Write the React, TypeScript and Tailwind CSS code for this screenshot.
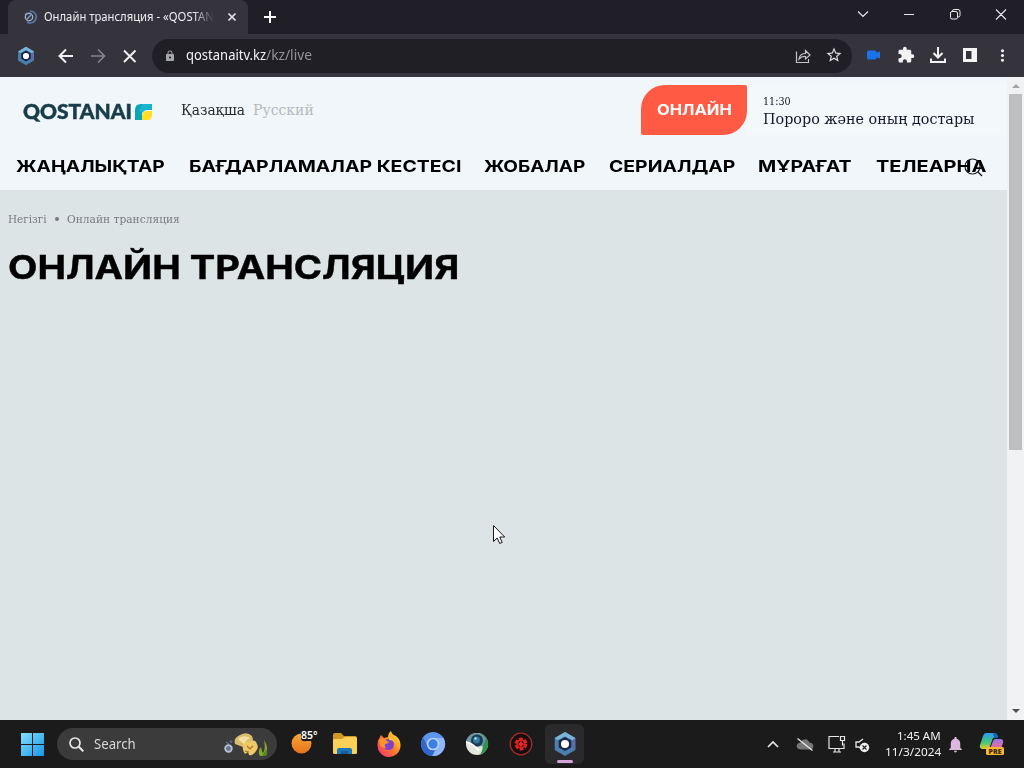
import { useLayoutEffect, useRef, useState } from "react";
import { MdLock, MdExtension, MdMoreVert, MdStarBorder, MdNotifications } from "react-icons/md";

const nav = [
  { label: "ЖАҢАЛЫҚТАР", w: 149 },
  { label: "БАҒДАРЛАМАЛАР КЕСТЕСІ", w: 272 },
  { label: "ЖОБАЛАР", w: 101 },
  { label: "СЕРИАЛДАР", w: 126 },
  { label: "МҰРАҒАТ", w: 94 },
  { label: "ТЕЛЕАРНА", w: 110 },
];

// stretches a line of text to the given width
function Fit({ text, w, className = "" }: { text: string; w: number; className?: string }) {
  const ref = useRef<HTMLSpanElement>(null);
  const [scale, setScale] = useState(1);

  useLayoutEffect(() => {
    if (ref.current) setScale(w / ref.current.offsetWidth);
  }, [w, text]);

  return (
    <span className={`block shrink-0 whitespace-nowrap ${className}`} style={{ width: w }}>
      <span ref={ref} className="inline-block origin-left" style={{ transform: `scaleX(${scale})` }}>
        {text}
      </span>
    </span>
  );
}

function HexIcon({ size }: { size: number }) {
  return (
    <svg width={size} height={size} viewBox="0 0 24 24">
      <path d="M12 1l9.500 5.500v11L12 23l-9.500-5.500v-11z" fill="#4a7fae" />
      <path d="M12 1l9.500 5.500v11L12 12z" fill="#5b6fb0" />
      <path d="M12 1L2.500 6.500l2.500 2L12 5l7 3.500 2.500-2z" fill="#78b4d6" />
      <path d="M12 5.500l5.800 3.300v6.500L12 18.500l-5.800-3.200V8.800z" fill="#1c2746" />
      <circle cx="12" cy="12" r="3.700" fill="#fff" />
    </svg>
  );
}

function TabStrip() {
  return (
    <div className="flex h-[34px] bg-[#201e27] pl-2">
      <div className="flex w-60 items-center rounded-t-lg bg-[#35343c] pl-3.5">
        <svg width="16" height="16" viewBox="0 0 16 16" fill="none">
          <path d="M8 2a6 6 0 1 1-3 11" stroke="#5578a5" strokeWidth="1.600" />
          <circle cx="7" cy="8" r="3.700" stroke="#9aacc5" strokeWidth="1.400" />
          <path d="M5 10l4-4M3 6l2-2" stroke="#7fa0c8" strokeWidth="1.400" />
        </svg>
        <div className="ml-1.5 w-[170px] mask-r-from-88%">
          <Fit text="Онлайн трансляция - «QOSTAN" w={170} className="text-[12px] text-[#eeeef0]" />
        </div>
        <svg className="ml-[13px]" width="10" height="10" viewBox="0 0 10 10">
          <path d="M1.500 1.500l7 7M8.500 1.500l-7 7" stroke="#e4e4e6" strokeWidth="1.700" />
        </svg>
      </div>
      <svg className="ml-[15px] mt-[10px]" width="14" height="14" viewBox="0 0 14 14">
        <path d="M7 1v12M1 7h12" stroke="#fff" strokeWidth="2" />
      </svg>
      <svg className="ml-auto" width="168" height="34" viewBox="856 0 168 34" fill="none" stroke="#e9e9ea">
        <path d="M858 11.500l5 5 5-5M904 14.500h10M996 9.500l10 10M1006 9.500l-10 10" strokeWidth="1.100" />
        <rect x="950.500" y="11.500" width="7" height="7.500" rx="1.500" />
        <path d="M952.500 11.500v-.5q0-1.500 1.500-1.500h4q2 0 2 2v4q0 1.500-2 1.500" />
      </svg>
    </div>
  );
}

function Toolbar() {
  return (
    <div className="flex h-[43px] items-center bg-[#35343c] pl-4">
      <HexIcon size={20} />
      <svg className="ml-[22px]" width="80" height="20" viewBox="58 45 80 20" fill="none" strokeWidth="2">
        <path d="M73 55H60M66 48.500L59.500 55l6.500 6.500" stroke="#f0f0f0" />
        <path d="M91 55h13M98 48.500l6.500 6.500-6.500 6.500" stroke="#85858a" strokeWidth="1.700" />
        <path d="M124 49.500l11.500 11.500M135.500 49.500L124 61" stroke="#f0f0f0" />
      </svg>
      <div className="ml-3.5 flex h-[34px] w-[700px] items-center rounded-full bg-[#201f26] pl-3 pr-[9px]">
        <MdLock className="text-[12px] text-[#a5a8ab]" />
        <Fit text="qostanaitv.kz" w={80} className="-mt-px ml-2.5 text-[13.5px] text-[#f2f2f3]" />
        <Fit text="/kz/live" w={46} className="-mt-px text-[13.5px] text-[#929297]" />
        <svg className="ml-auto" width="16" height="16" viewBox="0 0 16 16" fill="none" stroke="#c4c4c7" strokeWidth="1.200">
          <path d="M1.500 3.500v11h12V11" />
          <path d="M4 11q1-5.500 6.500-5.500V2.500L15 7l-4.500 4V8.500Q6.500 8.200 4 11z" />
        </svg>
        <MdStarBorder className="-mt-px ml-[14px] text-[18px] text-[#dedee0]" />
      </div>
      <svg className="ml-[15px] -mt-px" width="13" height="10" viewBox="0 0 13 10">
        <rect y=".5" width="9.500" height="9" rx="1.500" fill="#1a73e8" />
        <path d="M8.500 3L13 1.500v7L8.500 7z" fill="#1a73e8" />
      </svg>
      <MdExtension className="-mt-px ml-[17px] text-[18px] text-[#f2f2f3]" />
      <svg className="ml-[14px] -mt-px" width="18" height="18" viewBox="0 0 18 18" fill="none" stroke="#f2f2f3" strokeWidth="2">
        <path d="M9 1v10M4.500 7L9 11.500 13.500 7M2 12.500V16h14v-3.500" />
      </svg>
      <svg className="ml-[15px] -mt-px" width="16" height="16" viewBox="0 0 16 16">
        <path d="M1 1h14v14H1zM4 4v8h5.500V4z" fill="#f4f4f5" fillRule="evenodd" />
      </svg>
      <MdMoreVert className="-mt-px ml-[15px] text-[19px] text-[#f2f2f3]" />
    </div>
  );
}

function SiteHeader() {
  return (
    <header className="h-[113px] bg-[#f1f6fa] pt-2">
      <div className="flex h-[50px]">
        <div className="flex items-center pl-[23px]">
          <Fit text="QOSTANAI" w={109} className="mt-0.5 font-[Lato] text-[20px] leading-[50px] font-black text-[#183d4a] [-webkit-text-stroke:0.5px_#183d4a]" />
          <svg className="ml-[3px] mt-[3px]" width="17" height="17" viewBox="0 0 17 17">
            <path d="M0 17V7q0-6 6-6h11v6h-6q-4 0-4 4v6z" fill="#08a6b8" />
            <path d="M7 1h10v5l-6 1-4 3-3-2z" fill="#20b8d4" opacity=".8" />
            <path d="M7 17v-3q0-6 5-6h5v4q0 5-5 5z" fill="#ffdf24" />
          </svg>
        </div>
        <div className="ml-[29px] flex font-['DejaVu_Serif'] text-[14px] leading-[50px]">
          <Fit text="Қазақша" w={64} className="text-[#282c30]" />
          <Fit text="Русский" w={61} className="ml-2 text-[#b5babd]" />
        </div>
        <div className="ml-auto flex h-[50px] w-[106px] items-center justify-center rounded-tl-[24px] rounded-br-[24px] rounded-tr-[2px] rounded-bl-[2px] bg-[#ff5a43]">
          <Fit text="ОНЛАЙН" w={75} className="font-[Inter] text-[15px] font-bold text-white" />
        </div>
        <div className="w-[260px] bg-[#f3f9fb] pl-4 pt-2 font-['DejaVu_Serif'] text-[#151529]">
          <Fit text="11:30" w={28} className="text-[11px] leading-[17px]" />
          <Fit text="Пороро және оның достары" w={212} className="text-[14px] leading-[18px]" />
        </div>
      </div>
      <nav className="relative mt-[19px] flex gap-[23.5px] pl-4 font-[Inter] text-[16px] leading-6 font-bold text-black">
        {nav.map((n) => (
          <Fit key={n.label} text={n.label} w={n.w} />
        ))}
        <svg className="absolute left-[963px] top-[3px]" width="20" height="20" viewBox="0 0 20 20" fill="none" stroke="#14141c" strokeWidth="1.200">
          <circle cx="9.500" cy="9.500" r="7.500" />
          <path d="M15 15l4 4" />
        </svg>
      </nav>
    </header>
  );
}

function Page() {
  return (
    <div className="flex h-[643px] bg-[#dde4e6]">
      <main className="w-[1007px]">
        <SiteHeader />
        <div className="pl-2">
          <div className="flex items-center pt-5 font-['DejaVu_Serif'] text-[11.5px] leading-[18px] text-[#747a80]">
            <Fit text="Негізгі" w={39} />
            <span className="mx-2 size-1 rounded-full bg-[#747a80]" />
            <Fit text="Онлайн трансляция" w={113} />
          </div>
          <h1 className="mt-5 font-[Inter] text-[32px] leading-[40px] font-bold text-black">
            <Fit text="ОНЛАЙН ТРАНСЛЯЦИЯ" w={451} className="[-webkit-text-stroke:0.4px_#000]" />
          </h1>
        </div>
      </main>
      <div className="flex w-[17px] flex-col items-center bg-[#f1f2f3]">
        <svg width="16" height="17" viewBox="0 0 16 17">
          <path d="M4 11l4-4 4 4z" fill="#a4a5a7" />
        </svg>
        <div className="h-[356px] w-[13px] bg-[#bebfc1]" />
        <svg className="mt-auto" width="16" height="17" viewBox="0 0 16 17">
          <path d="M4 6h8l-4 4z" fill="#4f5052" />
        </svg>
      </div>
    </div>
  );
}

function TaskApps() {
  return (
    <>
      <div className="relative ml-3.5 size-7">
        <svg width="28" height="28" viewBox="0 0 28 28">
          <defs>
            <linearGradient id="moon" x1="0" y1="0" x2="0" y2="1">
              <stop stopColor="#f9a637" />
              <stop offset="1" stopColor="#e8731a" />
            </linearGradient>
          </defs>
          <circle cx="10.500" cy="13.500" r="10" fill="url(#moon)" />
          <path d="M10 9V-1h18v12H15q-4 1-5-2z" fill="#1b1b1b" />
        </svg>
        <span className="absolute left-[10px] -top-px text-[10.5px] leading-3 font-semibold text-white">85°</span>
      </div>
      <svg className="ml-[13px]" width="26" height="26" viewBox="0 0 26 26">
        <path d="M1 4q0-2 2-2h6l3 3h11q2 0 2 2v5H1z" fill="#cf9723" />
        <path d="M1 8h9l3-2h10q2 0 2 2v14q0 1-2 1H3q-2 0-2-1z" fill="#fbd056" />
        <path d="M5 23v-4q0-2 2-2h11q2 0 2 2v4z" fill="#1c77bd" />
        <path d="M9 23v-3h7v3z" fill="#155c99" />
      </svg>
      <svg className="ml-[18px]" width="26" height="26" viewBox="0 0 26 26">
        <defs>
          <linearGradient id="fox" x1="1" y1="0" x2="0" y2="1">
            <stop offset=".15" stopColor="#ffd534" />
            <stop offset=".5" stopColor="#ff7a2a" />
            <stop offset="1" stopColor="#f22e78" />
          </linearGradient>
        </defs>
        <path d="M4 6l1-2 3 3 4-1q0-4 3-6 1 4 5 5 5 4 4.500 10a11.500 11.500 0 0 1-23-1q0-5 2.500-8z" fill="url(#fox)" />
        <circle cx="12.500" cy="13.500" r="5.500" fill="#7c42c8" />
        <path d="M3 8q5-1 8 2l2 1q-1 2-4 2-1 2 1 4-5 0-6-4z" fill="#ff9429" />
        <path d="M13 5q6 2 7 8-3-4-7-4z" fill="#ffbd35" />
      </svg>
      <svg className="ml-[18px]" width="26" height="26" viewBox="0 0 26 26">
        <circle cx="13" cy="13" r="12" fill="#5c94ee" />
        <path d="M13 7h10.500A12 12 0 0 1 12 25l6-9z" fill="#91b8f5" />
        <path d="M3 6.500l5 9q2 4 7 3l-3 6.500A12 12 0 0 1 3 6.500z" fill="#3166cf" />
        <circle cx="13" cy="13" r="6.300" fill="#b9d4fb" />
        <circle cx="13" cy="13" r="4.700" fill="#3d80e4" />
      </svg>
      <svg className="ml-[18px]" width="26" height="26" viewBox="0 0 26 26">
        <circle cx="13" cy="13" r="11" fill="#e3e8df" />
        <path d="M17 2.500a11 11 0 0 1-1 21q4-6 2-12z" fill="#2f9150" />
        <path d="M2 10Q5 2 13 2q6 0 9 6l-3 7-8 1-6-5z" fill="#6d94a0" />
        <circle cx="13" cy="9.500" r="6" fill="#183b57" />
        <circle cx="12.500" cy="9" r="3.400" fill="#327a9a" />
        <circle cx="11.500" cy="7.500" r="1.200" fill="#b4e2ef" />
        <path d="M2 11q7 1 13 9" stroke="#fff" strokeWidth="1.500" fill="none" />
      </svg>
      <svg className="ml-[18px]" width="26" height="26" viewBox="0 0 26 26" fill="none">
        <circle cx="13" cy="13" r="10.800" fill="#160d0e" stroke="#a52b2d" strokeWidth="1.300" />
        <circle cx="13" cy="13" r="4.700" stroke="#e32020" strokeWidth="3.500" strokeDasharray="3.500 1.420" />
        <circle cx="13" cy="13" r="4" stroke="#e32020" strokeWidth="1.500" />
        <path d="M10 13l2-1.500 1-2.500 1 3 3 1-3 1.500-1 2z" fill="#ec2929" />
      </svg>
      <div className="ml-[11px] flex h-10 w-[39px] flex-col items-center rounded-md bg-[#2a2a2c] pt-[7px]">
        <HexIcon size={26} />
        <div className="mt-[3px] h-[3px] w-4 shrink-0 rounded-full bg-[#d5a5d8]" />
      </div>
    </>
  );
}

function Taskbar() {
  return (
    <div className="flex h-12 items-center bg-[#1b1b1b] pl-[21px]">
      <svg width="23" height="23" viewBox="0 0 23 23">
        <defs>
          <linearGradient id="win" x1="0" y1="0" x2="1" y2="1">
            <stop stopColor="#83e0fd" />
            <stop offset="1" stopColor="#1696e8" />
          </linearGradient>
        </defs>
        <path d="M0 0h11v11H0zM12 0h11v11H12zM0 12h11v11H0zM12 12h11v11H12z" fill="url(#win)" />
      </svg>
      <div className="ml-[13px] flex h-8 w-[220px] items-center rounded-full bg-[#3b3b3c] pl-3 pr-2">
        <svg width="15" height="15" viewBox="0 0 15 15" fill="none" stroke="#e7e7e8">
          <circle cx="6" cy="6" r="5" strokeWidth="1.700" />
          <path d="M9.800 9.800l4.500 4.500" strokeWidth="2" />
        </svg>
        <Fit text="Search" w={42} className="ml-2.5 text-[13.5px] text-[#d9d9da]" />
        <svg className="ml-auto" width="46" height="28" viewBox="0 0 46 28">
          <circle cx="5.500" cy="18.500" r="3.300" fill="#66748f" stroke="#b5c3d5" strokeWidth="1.800" />
          <circle cx="8" cy="11.500" r="1.500" fill="#53618b" />
          <path d="M3 12l3 2" stroke="#7889aa" />
          <path d="M12 14q-2-6 5-9 7-4 12 1 3 7-3 10l-6 1z" fill="#d9bd6c" />
          <path d="M15 9q5-5 12-1-5 2-5 7" fill="#f3dfa3" />
          <path d="M20 15q2-4 7-3 5-4 7 2 2 4-1 7-3 5-7 4l-1-3-3 2q-3-4-2-9z" fill="#efc967" />
          <path d="M24 16l3 3 3-3M22 21l4 1" stroke="#a46d2c" strokeWidth="1.200" fill="none" />
          <path d="M37 26q-3-5 1-9 1 5 2 6 3-4 1-13 5 7 2 16z" fill="#84a72a" />
          <path d="M39 26q3-5 5-7 1 4-1 7z" fill="#56862a" />
        </svg>
      </div>
      <TaskApps />
      <svg className="ml-auto" width="108" height="24" viewBox="764 732 108 24" fill="none" stroke="#e6e6e7">
        <path d="M768 747l5-5 5 5" strokeWidth="1.700" />
        <path d="M801 749h9q3 0 3-3t-4-3q-1-4-5-3-2 0-3 3-4 0-4 3t4 3z" fill="#777" stroke="#777" />
        <path d="M797.500 738.500l15 12" strokeWidth="1.400" />
        <path d="M839 736.500h-10v12h15v-5M833 752h8M835 748.500v3M839 748.500v3M840.500 736.500h4v4h-4zM842.500 740.500v5" strokeWidth="1.200" />
        <path d="M863 739l-4 3h-3v5h3l1 1" strokeWidth="1.300" />
        <circle cx="864.500" cy="747.500" r="4.700" fill="#f1f1f1" stroke="none" />
        <path d="M862.500 745.500l4 4M866.500 745.500l-4 4" stroke="#222" strokeWidth="1.200" />
      </svg>
      <div className="ml-[13px] flex w-14 flex-col items-end text-[11px] leading-4 text-[#f1f1f2]">
        <Fit text="1:45 AM" w={44} />
        <Fit text="11/3/2024" w={56} />
      </div>
      <MdNotifications className="ml-[5px] text-[19px] text-[#dbb9de]" />
      <svg className="ml-[14px] mr-[19px]" width="26" height="26" viewBox="0 0 26 26">
        <defs>
          <linearGradient id="cpl" x1="0" y1="0" x2="0" y2="1">
            <stop stopColor="#299bed" />
            <stop offset=".6" stopColor="#48c778" />
            <stop offset="1" stopColor="#f0c92c" />
          </linearGradient>
          <linearGradient id="cpr" x1="0" y1="0" x2="0" y2="1">
            <stop stopColor="#9b75e8" />
            <stop offset="1" stopColor="#f36894" />
          </linearGradient>
        </defs>
        <path d="M7 2h8q3 0 4 4l-5 1-4 11H4q-4 0-3-4l3-9q1-3 3-3z" fill="url(#cpl)" />
        <path d="M16 8h5q4 0 3 4l-2 6H11l3-8q1-2 2-2z" fill="url(#cpr)" />
        <path d="M14 2h1q3 0 4 5h-4z" fill="#1467b8" />
        <rect x="7" y="16" width="18" height="8" rx="1.500" fill="#f8b832" />
        <text x="16" y="22.600" textAnchor="middle" fontFamily="Open Sans" fontSize="7" fontWeight="800" fill="#3c2804">PRE</text>
      </svg>
    </div>
  );
}

export default function App() {
  return (
    <div className="relative h-[768px] w-[1024px] overflow-hidden font-['Noto_Sans',sans-serif]">
      <TabStrip />
      <Toolbar />
      <Page />
      <Taskbar />
      <svg className="absolute left-[492px] top-[524px]" width="14" height="21" viewBox="0 0 14 21">
        <path d="M1.500 1.500v16l3.700-3.500 2.500 5.500 2.500-1.100-2.500-5.400h5z" fill="#fff" stroke="#16181a" />
      </svg>
    </div>
  );
}
